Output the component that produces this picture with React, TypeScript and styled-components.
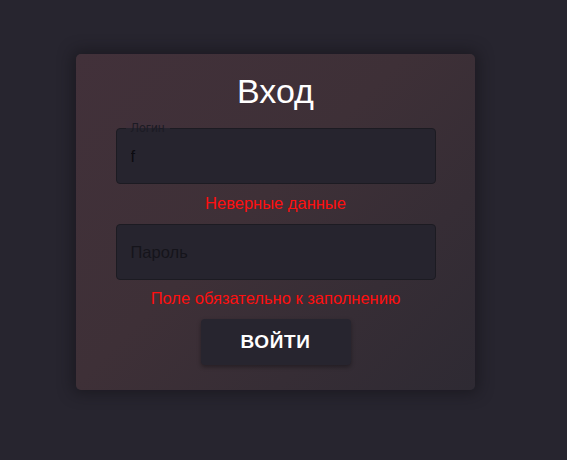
import React from "react";
import styled, { createGlobalStyle } from "styled-components";

const Global = createGlobalStyle`
  html, body { margin: 0; padding: 0; background: #27252f; }
  body { font-family: Roboto, "Liberation Sans", Arial, sans-serif; }
`;

const Page = styled.div`
  width: 567px;
  height: 460px;
  display: flex;
  justify-content: flex-start;
  padding: 54px 0 0 76px;
  box-sizing: border-box;
`;

const Card = styled.form`
  width: 399px;
  height: 336px;
  box-sizing: border-box;
  border-radius: 5px;
  background: linear-gradient(135deg, #42313a 0%, #3e3037 45%, #2e2a33 100%);
  box-shadow: 0 0 14px 4px rgba(20, 18, 24, 0.55);
  display: flex;
  flex-direction: column;
  align-items: center;
  padding-top: 17px;
`;

const Title = styled.h1`
  margin: 0;
  font-family: "Liberation Sans", Arial, sans-serif;
  font-weight: 400;
  font-size: 34px;
  line-height: 40px;
  color: #ffffff;
`;

const Field = styled.div<{ $top: number }>`
  position: relative;
  margin-top: ${(p) => p.$top}px;
  width: 320px;
  height: 56px;
  box-sizing: border-box;
  padding: 0 14px;
  border: 1px solid #1c1b22;
  border-radius: 4px;
  background: #26242e;
  display: flex;
  align-items: center;
`;

const Legend = styled.span`
  position: absolute;
  left: 9px;
  top: -8px;
  padding: 0 5px;
  font-family: Roboto, sans-serif;
  font-size: 12px;
  line-height: 14px;
  color: #1c1b24;
  background: linear-gradient(to bottom, #40303a 50%, #26242e 50%);
`;

const Input = styled.input`
  flex: 1;
  border: none;
  outline: none;
  background: transparent;
  padding: 0;
  font-family: "Liberation Sans", Arial, sans-serif;
  font-size: 16.5px;
  color: #0c0b10;
  &::placeholder { color: #15141b; opacity: 1; }
`;

const Error = styled.div<{ $top: number }>`
  margin-top: ${(p) => p.$top}px;
  font-family: "Liberation Sans", Arial, sans-serif;
  font-size: 16.5px;
  line-height: 18px;
  color: #ff0f0f;
`;

const Button = styled.button`
  margin-top: 12px;
  width: 150px;
  height: 46px;
  border: none;
  border-radius: 4px;
  background: #27252f;
  box-shadow: 0 2px 4px rgba(0, 0, 0, 0.35);
  color: #ffffff;
  font-family: "Liberation Sans", Arial, sans-serif;
  font-weight: 700;
  font-size: 19px;
  letter-spacing: 0.6px;
`;

export default function App() {
  return (
    <>
      <Global />
      <Page>
        <Card onSubmit={(e) => e.preventDefault()}>
          <Title>Вход</Title>
          <Field $top={17}>
            <Legend>Логин</Legend>
            <Input defaultValue="f" />
          </Field>
          <Error $top={10}>Неверные данные</Error>
          <Field $top={12}>
            <Input placeholder="Пароль" />
          </Field>
          <Error $top={9}>Поле обязательно к заполнению</Error>
          <Button type="submit">ВОЙТИ</Button>
        </Card>
      </Page>
    </>
  );
}
